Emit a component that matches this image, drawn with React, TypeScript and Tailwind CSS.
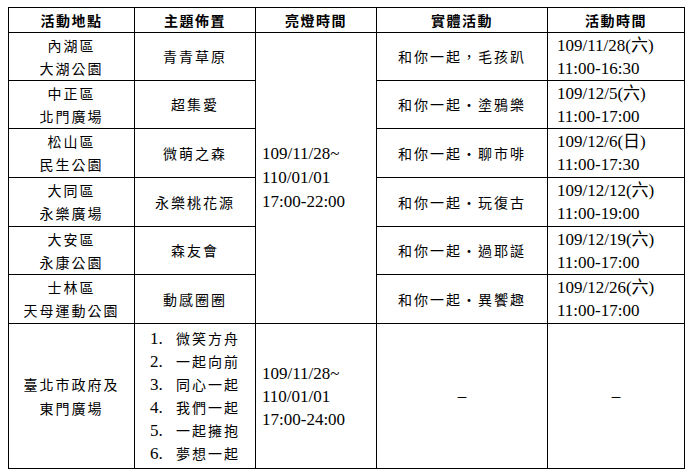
import React from 'react';

const rows = [
  { area: '內湖區', park: '大湖公園', theme: '青青草原', act: '和你一起，毛孩趴', date: '109/11/28(六)', time: '11:00-16:30', h: 'h-[48px]' },
  { area: '中正區', park: '北門廣場', theme: '超集愛', act: '和你一起・塗鴉樂', date: '109/12/5(六)', time: '11:00-17:00', h: 'h-[48px]' },
  { area: '松山區', park: '民生公園', theme: '微萌之森', act: '和你一起・聊市啡', date: '109/12/6(日)', time: '11:00-17:30', h: 'h-[49px]' },
  { area: '大同區', park: '永樂廣場', theme: '永樂桃花源', act: '和你一起・玩復古', date: '109/12/12(六)', time: '11:00-19:00', h: 'h-[49px]' },
  { area: '大安區', park: '永康公園', theme: '森友會', act: '和你一起・過耶誕', date: '109/12/19(六)', time: '11:00-17:00', h: 'h-[48px]' },
  { area: '士林區', park: '天母運動公園', theme: '動感圈圈', act: '和你一起・異饗趣', date: '109/12/26(六)', time: '11:00-17:00', h: 'h-[49px]' },
];

const themes = ['微笑方舟', '一起向前', '同心一起', '我們一起', '一起擁抱', '夢想一起'];

const cjk = "font-['Noto_Sans_CJK_TC',sans-serif] text-[14px] tracking-[2px]";
const num = "font-['Liberation_Serif','Noto_Sans_CJK_TC',serif] text-[17px]";
const cell = 'border border-black align-middle p-0';

export default function App() {
  return (
    <div className="bg-white w-[690px] h-[475px] pt-[7px] pl-[8px] text-black">
      <table className="table-fixed border-collapse w-[676px]">
        <colgroup>
          <col className="w-[126px]" />
          <col className="w-[121px]" />
          <col className="w-[121px]" />
          <col className="w-[171px]" />
          <col className="w-[137px]" />
        </colgroup>
        <thead>
          <tr className="h-[25px]">
            {['活動地點', '主題佈置', '亮燈時間', '實體活動', '活動時間'].map((t) => (
              <th key={t} className={`${cell} font-['Noto_Sans_CJK_TC',sans-serif] text-[14px] font-bold tracking-[1.5px] leading-none text-center`}>
                {t}
              </th>
            ))}
          </tr>
        </thead>
        <tbody>
          {rows.map((r, i) => (
            <tr key={r.area} className={r.h}>
              <td className={`${cell} ${cjk} text-center leading-[23px]`}>
                <div>{r.area}</div>
                <div>{r.park}</div>
              </td>
              <td className={`${cell} ${cjk} text-center`}>{r.theme}</td>
              {i === 0 && (
                <td rowSpan={6} className={`${cell} ${num} pl-[6px] leading-[24px]`}>
                  <div>109/11/28~</div>
                  <div>110/01/01</div>
                  <div>17:00-22:00</div>
                </td>
              )}
              <td className={`${cell} ${cjk} text-center`}>{r.act}</td>
              <td className={`${cell} ${num} pl-[9px] leading-[23px]`}>
                <div>{r.date}</div>
                <div>{r.time}</div>
              </td>
            </tr>
          ))}
          <tr className="h-[145px]">
            <td className={`${cell} ${cjk} text-center leading-[24px]`}>
              <div>臺北市政府及</div>
              <div>東門廣場</div>
            </td>
            <td className={`${cell} text-center`}>
              <div className="inline-block text-left">
                {themes.map((t, i) => (
                  <div key={t} className="flex items-center h-[23px]">
                    <span className={`${num} w-[26px]`}>{i + 1}.</span>
                    <span className={cjk}>{t}</span>
                  </div>
                ))}
              </div>
            </td>
            <td className={`${cell} ${num} pl-[6px] leading-[23px]`}>
              <div>109/11/28~</div>
              <div>110/01/01</div>
              <div>17:00-24:00</div>
            </td>
            <td className={`${cell} ${num} text-center`}>–</td>
            <td className={`${cell} ${num} text-center`}>–</td>
          </tr>
        </tbody>
      </table>
    </div>
  );
}
